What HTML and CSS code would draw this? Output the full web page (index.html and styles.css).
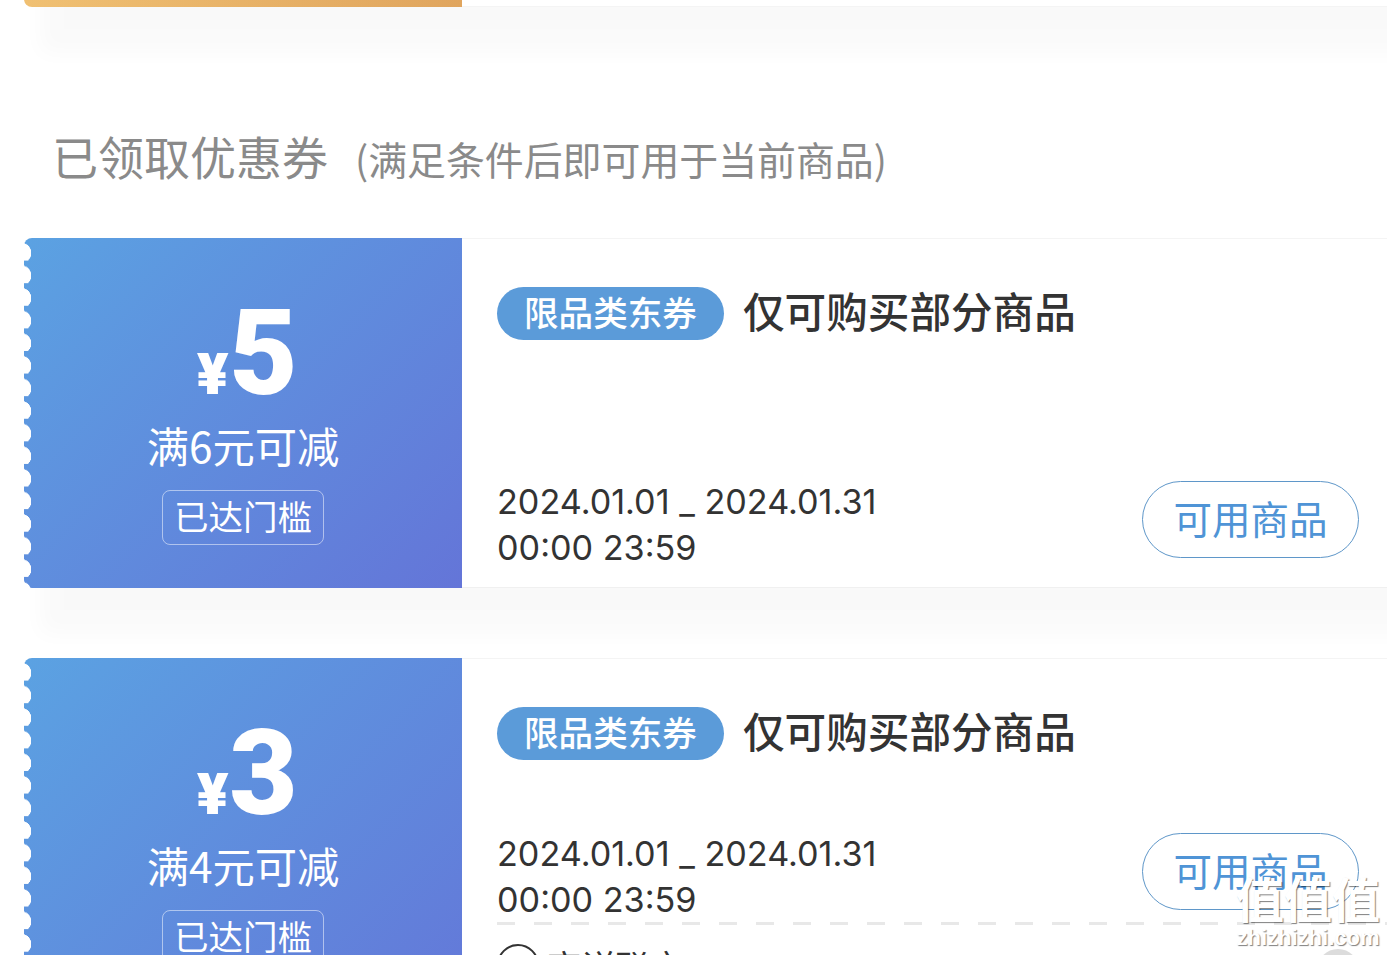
FILE: index.html
```html
<!DOCTYPE html>
<html lang="zh-CN">
<head>
<meta charset="utf-8">
<title>优惠券</title>
<link rel="stylesheet" href="styles.css">
</head>
<body>
<main class="page">
  <div class="stub"><div class="stub-left"></div><div class="stub-right"></div></div>
  <h2 class="heading"><span class="heading-main">已领取优惠券</span><span class="heading-sub">(满足条件后即可用于当前商品)</span></h2>

  <section class="card">
    <div class="coupon">
      <div class="amount"><span class="yen">¥</span><span class="num">5</span></div>
      <div class="cond">满6元可减</div>
      <div class="badge">已达门槛</div>
    </div>
    <div class="body">
      <div class="title-row"><span class="tag">限品类东券</span><span class="title">仅可购买部分商品</span></div>
      <div class="meta meta-first">
        <div class="dates">2024.01.01 _ 2024.01.31<br>00:00 23:59</div>
        <div class="btn">可用商品</div>
      </div>
    </div>
  </section>

  <section class="card card-open">
    <div class="coupon">
      <div class="amount"><span class="yen">¥</span><span class="num">3</span></div>
      <div class="cond">满4元可减</div>
      <div class="badge">已达门槛</div>
    </div>
    <div class="body">
      <div class="title-row"><span class="tag">限品类东券</span><span class="title">仅可购买部分商品</span></div>
      <div class="meta meta-second">
        <div class="dates">2024.01.01 _ 2024.01.31<br>00:00 23:59</div>
        <div class="btn">可用商品</div>
      </div>
      <div class="foot">
        <span class="circle"></span><span class="foot-text">商详联京</span>
        <span class="chev"></span>
      </div>
    </div>
  </section>

  <div class="watermark"><div class="wm-big">值值值</div><div class="wm-small">zhizhizhi.com</div></div>
</main>
</body>
</html>
```
FILE: styles.css
```css
* { box-sizing: border-box; }
html, body { margin: 0; padding: 0; background: #fff; }
.page {
  position: relative;
  width: 1387px;
  height: 955px;
  overflow: hidden;
  background: #fff;
  font-family: "Noto Sans CJK SC", sans-serif;
  color: #333;
}
.stub {
  display: flex;
  height: 350px;
  margin: -343px -40px 0 24px;
  box-shadow: 0 62px 20px -16px rgba(0, 0, 0, .024);
}
.stub-left {
  width: 438px;
  background: linear-gradient(90deg, #f0c072, #e0a55e);
  border-radius: 0 0 0 8px;
}
.stub-right { flex: 1; background: #fff; border-bottom: 1px solid #f4f4f4; }
.heading {
  display: flex;
  align-items: baseline;
  margin: 0;
  padding: 115px 0 0 52px;
  height: 231px;
  font-weight: 400;
  color: #8a8a8a;
  line-height: 66px;
}
.heading-main { font-size: 46px; }
.heading-sub { font-size: 38.9px; margin-left: 27px; }
.card {
  display: flex;
  height: 350px;
  margin: 0 -40px 70px 24px;
  background: #fff;
  box-shadow: 0 62px 20px -16px rgba(0, 0, 0, .024);
}
.card-open { height: 400px; }
.coupon {
  width: 438px;
  flex: none;
  display: flex;
  flex-direction: column;
  align-items: center;
  padding-top: 56px;
  color: #fff;
  border-radius: 8px 0 0 8px;
  background:
    radial-gradient(circle 10.5px at -3px 15px, #fff 96%, rgba(255,255,255,0) 100%) 0 0 / 10px 22.6px repeat-y,
    linear-gradient(135deg, #5ba2e2, #6475d8);
}
.amount {
  display: flex;
  align-items: baseline;
  height: 120px;
  line-height: 120px;
  font-weight: 900;
  padding-left: 8px;
}
.yen { font-family: "Inter", sans-serif; font-size: 56px; }
.num { font-family: "Roboto", sans-serif; font-size: 118px; }
.cond {
  font-size: 42.3px;
  line-height: 56px;
  margin-top: 3px;
  white-space: nowrap;
}
.badge {
  width: 162px;
  height: 55px;
  margin-top: 17px;
  border: 1px solid rgba(255, 255, 255, .5);
  border-radius: 8px;
  font-size: 34.5px;
  line-height: 49px;
  text-align: center;
}
.body {
  flex: 1;
  display: flex;
  flex-direction: column;
  min-width: 0;
  padding: 48px 0 0 35px;
  border-top: 1px solid #f4f4f4;
  border-bottom: 1px solid #f0f0f0;
}
.title-row { display: flex; align-items: center; height: 53px; }
.tag {
  width: 227px;
  height: 53px;
  border-radius: 27px;
  background: #5b9bd9;
  color: #fff;
  font-size: 34.6px;
  font-weight: 500;
  line-height: 48px;
  text-align: center;
}
.title { margin-left: 19px; font-size: 41.6px; font-weight: 500; line-height: 46px; height: 53px; color: #333; }
.meta {
  display: flex;
  justify-content: space-between;
  align-items: flex-start;
  padding-right: 68px;
}
.meta-first { margin-top: 139px; }
.meta-second { margin-top: 71px; }
.dates {
  font-family: "Inter", sans-serif;
  font-size: 34.2px;
  line-height: 46px;
  color: #333;
  white-space: nowrap;
}
.btn {
  width: 217px;
  height: 77px;
  margin-top: 2px;
  border: 1px solid #5f97c9;
  border-radius: 38.5px;
  color: #4f94d6;
  font-size: 38.5px;
  line-height: 70px;
  text-align: center;
}
.foot {
  position: relative;
  display: flex;
  align-items: flex-start;
  margin-top: -1px;
  padding-top: 22px;
  background: repeating-linear-gradient(90deg, #e8e8e8 0 18px, transparent 18px 37px) top left / 100% 3px no-repeat;
}
.circle {
  width: 42px;
  height: 42px;
  flex: none;
  border: 2px solid #333;
  border-radius: 50%;
}
.foot-text { margin-left: 8px; font-size: 34.3px; line-height: 43px; color: #333; }
.chev {
  position: absolute;
  right: 68px;
  top: 27px;
  width: 42px;
  height: 42px;
  border-radius: 50%;
  background: #dcdcdc;
}
.watermark {
  position: absolute;
  left: 1236px;
  top: 868px;
  width: 144px;
  color: #fff;
  text-align: center;
  text-shadow: 1px 1px 1px rgba(0, 0, 0, .5);
}
.wm-big { font-size: 48px; font-weight: 700; line-height: 58px; white-space: nowrap; }
.wm-small { font-family: "Liberation Sans", sans-serif; font-size: 22px; font-weight: 700; line-height: 24px; white-space: nowrap; }
```
